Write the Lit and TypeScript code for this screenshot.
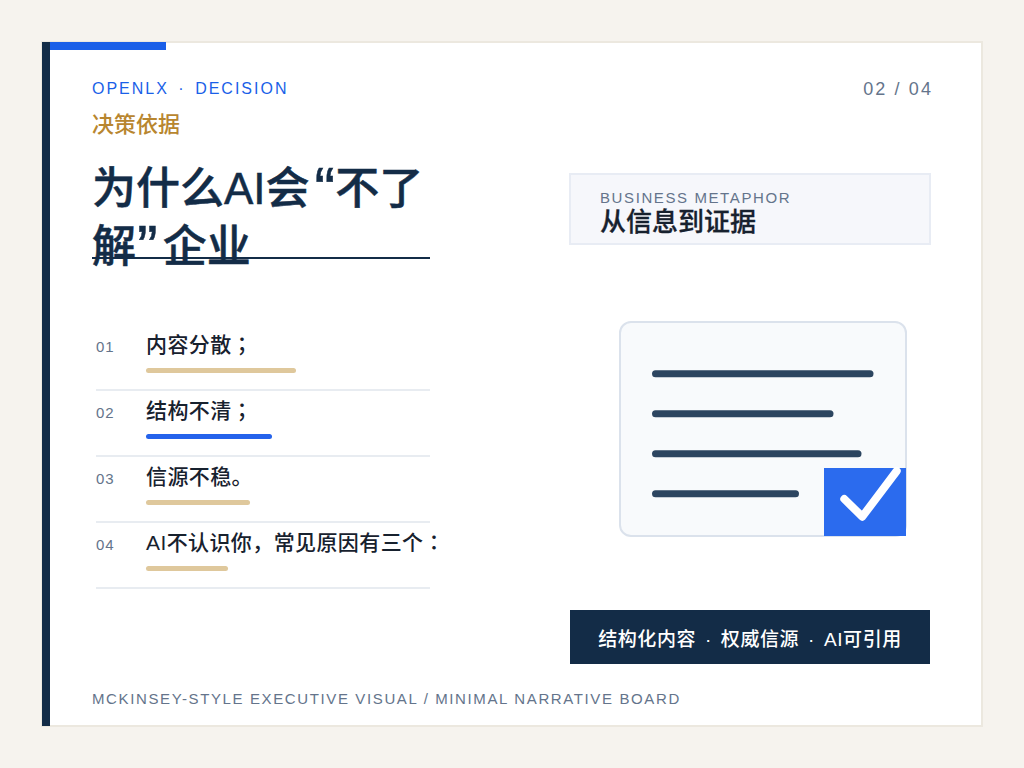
import { LitElement, html, css } from "lit";
import { customElement } from "lit/decorators.js";

const ITEMS = [
  { num: "01", text: "内容分散", tail: "；", bar: 150, color: "#dfc89c" },
  { num: "02", text: "结构不清", tail: "；", bar: 126, color: "#2563eb" },
  { num: "03", text: "信源不稳。", tail: "", bar: 104, color: "#dfc89c" },
  { num: "04", text: "AI不认识你，常见原因有三个", tail: "：", bar: 82, color: "#dfc89c" },
];

@customElement("app-root")
export class AppRoot extends LitElement {
  static styles = css`
    :host {
      display: block;
      font-family: "Liberation Sans", "Noto Sans CJK SC", sans-serif;
    }
    .page {
      width: 1024px;
      height: 768px;
      padding: 41px;
      box-sizing: border-box;
      background: #f6f3ee;
    }
    .board {
      position: relative;
      box-sizing: border-box;
      width: 942px;
      height: 686px;
      background: #fff;
      border: 2px solid #ece8df;
      padding: 0 0 0 49px;
      display: flex;
      flex-direction: column;
    }
    .spine {
      position: absolute;
      left: -1px;
      top: -1px;
      bottom: -1px;
      width: 8px;
      background: #132c47;
    }
    .accent {
      position: absolute;
      left: 7px;
      top: -1px;
      width: 116px;
      height: 8px;
      background: #1a5fe8;
    }
    .main {
      display: grid;
      grid-template-columns: 338px 360px;
      column-gap: 140px;
    }
    .left {
      padding-top: 36px;
    }
    .eyebrow {
      font-size: 16px;
      line-height: 20px;
      letter-spacing: 2px;
      word-spacing: 3px;
      color: #1a5fe8;
    }
    .sub {
      margin-top: 11px;
      font-size: 22px;
      line-height: 30px;
      font-weight: 500;
      color: #b8862f;
    }
    .title-wrap {
      height: 97px;
      margin-top: 20px;
      border-bottom: 2px solid #132c47;
    }
    .title {
      margin: 0;
      font-size: 44px;
      line-height: 58px;
      font-weight: 500;
      -webkit-text-stroke: 0.5px #132c47;
      color: #132c47;
    }
    .q {
      font-size: 62px;
      line-height: 0;
      vertical-align: -6px;
      padding-left: 5px;
    }
    .q.close {
      padding: 0 5px 0 1px;
    }
    .list {
      margin-top: 66px;
      margin-left: 4px;
    }
    .row {
      box-sizing: border-box;
      height: 66px;
      border-bottom: 2px solid #e8ecf1;
      display: flex;
    }
    .num {
      flex: none;
      width: 50px;
      padding-top: 13px;
      font-size: 15px;
      line-height: 18px;
      letter-spacing: 1px;
      color: #64748b;
    }
    .text {
      font-size: 21px;
      line-height: 28px;
      letter-spacing: 0.4px;
      padding-top: 6px;
      font-weight: 500;
      color: #17212e;
      white-space: nowrap;
    }
    .tail {
      font-family: "Noto Sans CJK TC", sans-serif;
      line-height: 0;
    }
    .bar {
      height: 5px;
      margin-top: 9px;
      border-radius: 3px;
    }
    .right {
      display: flex;
      flex-direction: column;
      padding-top: 36px;
    }
    .pageno {
      align-self: flex-end;
      margin-right: -3px;
      font-size: 18px;
      line-height: 20px;
      letter-spacing: 2.1px;
      color: #64748b;
    }
    .metaphor {
      box-sizing: border-box;
      margin: 74px 0 0 -1px;
      width: 362px;
      height: 72px;
      background: #f6f7fb;
      border: 2px solid #e8ecf4;
      padding: 14px 29px;
    }
    .metaphor .label {
      font-size: 15px;
      line-height: 18px;
      letter-spacing: 1.6px;
      color: #64748b;
    }
    .metaphor .head {
      font-size: 26px;
      line-height: 28px;
      font-weight: 500;
      -webkit-text-stroke: 0.3px #17212e;
      color: #17212e;
      margin-top: 1px;
    }
    .doc {
      display: block;
      margin: 76px 0 0 49px;
    }
    .band {
      margin-top: 73px;
      height: 54px;
      background: #132c47;
      color: #fff;
      font-size: 19px;
      font-weight: 500;
      letter-spacing: 0.6px;
      word-spacing: 3px;
      display: flex;
      align-items: center;
      justify-content: center;
    }
    .footer {
      margin-top: 25px;
      font-size: 15px;
      line-height: 20px;
      letter-spacing: 1.62px;
      color: #64748b;
    }
  `;

  render() {
    return html`
      <div class="page">
        <div class="board">
          <div class="spine"></div>
          <div class="accent"></div>
          <div class="main">
            <div class="left">
              <div class="eyebrow">OPENLX · DECISION</div>
              <div class="sub">决策依据</div>
              <div class="title-wrap">
                <h1 class="title">为什么AI会<span class="q">“</span>不了解<span class="q close">”</span>企业</h1>
              </div>
              <div class="list">
                ${ITEMS.map(
                  (it) => html`
                    <div class="row">
                      <div class="num">${it.num}</div>
                      <div>
                        <div class="text">${it.text}<span class="tail">${it.tail}</span></div>
                        <div class="bar" style="width:${it.bar}px;background:${it.color}"></div>
                      </div>
                    </div>
                  `
                )}
              </div>
            </div>
            <div class="right">
              <div class="pageno">02 / 04</div>
              <div class="metaphor">
                <div class="label">BUSINESS METAPHOR</div>
                <div class="head">从信息到证据</div>
              </div>
              <svg class="doc" width="288" height="216" viewBox="0 0 288 216" fill="none">
                <rect x="1" y="1" width="286" height="214" rx="11" fill="#f8fafc" stroke="#dbe2ec" stroke-width="2" />
                <g stroke="#2c4560" stroke-width="7" stroke-linecap="round">
                  <path d="M36.500 52.700H251" />
                  <path d="M36.500 92.700H211" />
                  <path d="M36.500 132.700H239" />
                  <path d="M36.500 172.700H176.500" />
                </g>
                <rect x="205" y="147" width="82" height="68" fill="#2b6bee" />
                <path d="M225.300 178L243.300 195.700L277.700 150" stroke="#fff" stroke-width="8" stroke-linecap="round" stroke-linejoin="round" />
              </svg>
              <div class="band">结构化内容 · 权威信源 · AI可引用</div>
            </div>
          </div>
          <div class="footer">MCKINSEY-STYLE EXECUTIVE VISUAL / MINIMAL NARRATIVE BOARD</div>
        </div>
      </div>
    `;
  }
}
